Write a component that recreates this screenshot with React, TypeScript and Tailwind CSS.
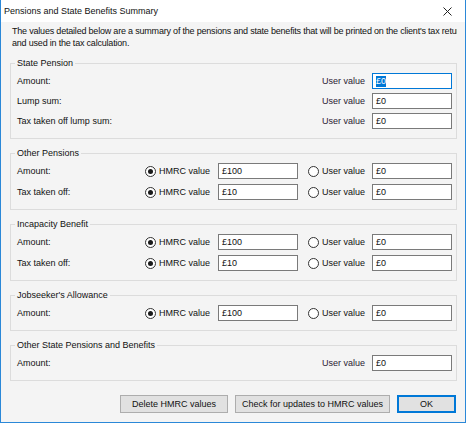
import React from "react";

function Field({ value, focused }: { value: string; focused?: boolean }) {
  return (
    <div
      className={
        "h-[16px] bg-white border flex items-center pl-[3px] " +
        (focused ? "border-[#0078d7]" : "border-[#7a7a7a]")
      }
    >
      {focused ? (
        <span className="bg-[#0078d7] text-white leading-[11px]">{value}</span>
      ) : (
        <span>{value}</span>
      )}
    </div>
  );
}

function Radio({ checked }: { checked?: boolean }) {
  return (
    <span className="w-[11px] h-[11px] rounded-full border border-[#333] bg-white flex items-center justify-center shrink-0">
      {checked && <span className="w-[5px] h-[5px] rounded-full bg-[#1a1a1a]" />}
    </span>
  );
}

function Group({
  title,
  tight,
  children,
}: {
  title: string;
  tight?: boolean;
  children: React.ReactNode;
}) {
  return (
    <fieldset className="border border-[#dcdcdc] pl-[6px] pr-[4px] pb-[9px]">
      <legend className="ml-[-2px] px-[2px] leading-[12px]">{title}</legend>
      <div className={"flex flex-col pt-[4px] " + (tight ? "gap-[4px]" : "gap-[5px]")}>
        {children}
      </div>
    </fieldset>
  );
}

function UserRow({ label, value, focused }: { label: string; value: string; focused?: boolean }) {
  return (
    <div className="grid grid-cols-[1fr_73px_80px_10px_64px_80px] items-center h-[16px]">
      <span>{label}</span>
      <span />
      <span />
      <span />
      <span className="pl-[14px] text-[#2a2233]">User value</span>
      <Field value={value} focused={focused} />
    </div>
  );
}

function ChoiceRow({ label, hmrc, user }: { label: string; hmrc: string; user: string }) {
  return (
    <div className="grid grid-cols-[1fr_73px_80px_10px_64px_80px] items-center h-[16px]">
      <span>{label}</span>
      <span className="flex items-center gap-[3px]">
        <Radio checked />
        <span>HMRC value</span>
      </span>
      <Field value={hmrc} />
      <span />
      <span className="flex items-center gap-[3px]">
        <Radio />
        <span>User value</span>
      </span>
      <Field value={user} />
    </div>
  );
}

export default function App() {
  return (
    <div className="w-[466px] h-[423px] flex flex-col border-x border-b border-[#2b88d8] bg-[#f4f4f4] text-[9px] leading-[12px] text-[#111] font-['Liberation_Sans',Arial,sans-serif] overflow-hidden">
      <div className="h-[22px] shrink-0 bg-white flex items-center justify-between pl-[3px] pr-[13px]">
        <span>Pensions and State Benefits Summary</span>
        <svg width="9" height="9" viewBox="0 0 9 9">
          <path d="M0.5 0.5 L8.5 8.5 M8.5 0.5 L0.5 8.5" stroke="#222" strokeWidth="1" />
        </svg>
      </div>

      <div className="flex flex-col pl-[9px] pr-[8px]">
        <p className="pt-[3px] pl-[2px] whitespace-nowrap overflow-hidden tracking-[-0.2px]">
          The values detailed below are a summary of the pensions and state benefits that will be printed on the client's tax return
          <br />
          and used in the tax calculation.
        </p>

        <div className="mt-[8px] flex flex-col gap-[8px]">
          <Group title="State Pension" tight>
            <UserRow label="Amount:" value="£0" focused />
            <UserRow label="Lump sum:" value="£0" />
            <UserRow label="Tax taken off lump sum:" value="£0" />
          </Group>

          <Group title="Other Pensions">
            <ChoiceRow label="Amount:" hmrc="£100" user="£0" />
            <ChoiceRow label="Tax taken off:" hmrc="£10" user="£0" />
          </Group>

          <Group title="Incapacity Benefit">
            <ChoiceRow label="Amount:" hmrc="£100" user="£0" />
            <ChoiceRow label="Tax taken off:" hmrc="£10" user="£0" />
          </Group>

          <Group title="Jobseeker's Allowance">
            <ChoiceRow label="Amount:" hmrc="£100" user="£0" />
          </Group>

          <Group title="Other State Pensions and Benefits">
            <UserRow label="Amount:" value="£0" />
          </Group>
        </div>

        <div className="mt-[14px] flex justify-end gap-[7px] pr-[1px]">
          <button className="w-[108px] h-[18px] bg-[#e1e1e1] border border-[#adadad]">
            Delete HMRC values
          </button>
          <button className="w-[155px] h-[18px] bg-[#e1e1e1] border border-[#adadad]">
            Check for updates to HMRC values
          </button>
          <button className="w-[59px] h-[18px] bg-[#e1e1e1] border border-[#0078d7] shadow-[inset_0_0_0_1px_#0078d7]">
            OK
          </button>
        </div>
      </div>
    </div>
  );
}
